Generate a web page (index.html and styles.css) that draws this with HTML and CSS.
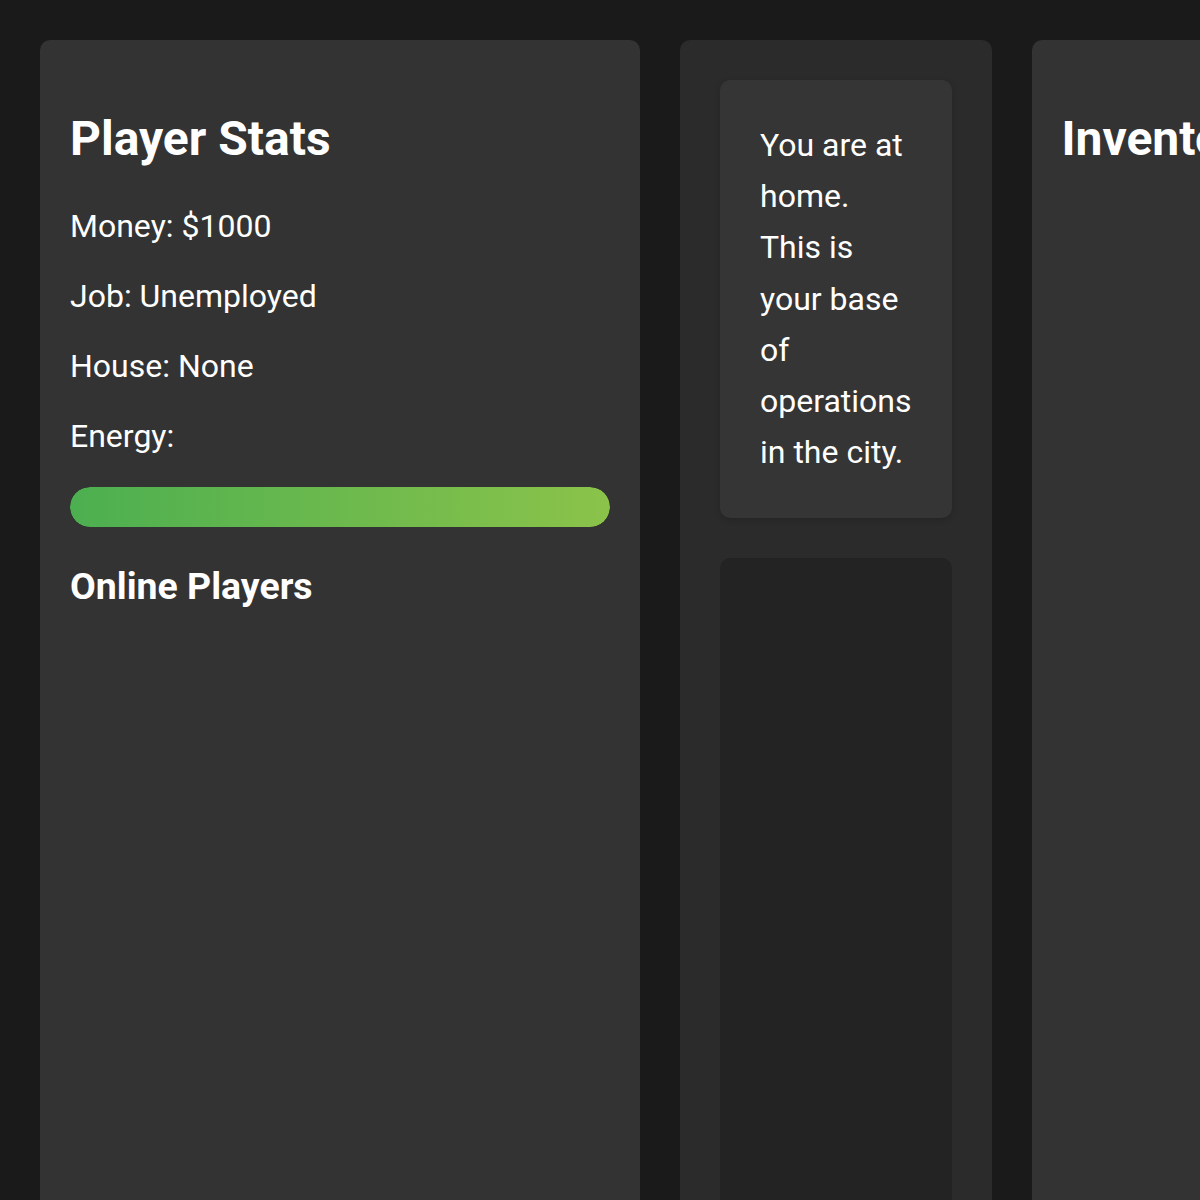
FILE: index.html
```html
<!DOCTYPE html>
<html lang="en">
<head>
<meta charset="utf-8">
<title>City Game</title>
<link rel="stylesheet" href="styles.css">
</head>
<body>
<div class="layout">
  <section class="panel stats">
    <h2>Player Stats</h2>
    <p>Money: $1000</p>
    <p>Job: Unemployed</p>
    <p>House: None</p>
    <p>Energy:</p>
    <div class="energy-bar"><div class="energy-fill" style="width:100%"></div></div>
    <h3>Online Players</h3>
    <div class="players"></div>
  </section>
  <section class="panel center">
    <div class="location">You are at home. This is your base of operations in the city.</div>
    <div class="log"></div>
  </section>
  <section class="panel inventory">
    <h2>Inventory</h2>
  </section>
</div>
</body>
</html>
```
FILE: styles.css
```css
html, body {
  margin: 0;
  padding: 0;
}
body {
  background: #1a1a1a;
  color: #ffffff;
  font-family: Roboto, "Noto Sans", sans-serif;
  font-size: 32px;
  overflow: hidden;
}
.layout {
  display: grid;
  grid-template-columns: 600px 1fr 600px;
  gap: 40px;
  padding: 40px;
  width: 1120px;
  min-height: 1300px;
}
.panel {
  border-radius: 10px;
  min-height: 1300px;
}
.stats, .inventory {
  background: #333333;
  padding: 30px;
}
.stats p {
  margin: 32px 0;
}
h2 {
  font-size: 48px;
  font-weight: 700;
  margin: 40px 0;
}
h3 {
  font-size: 37.44px;
  font-weight: 700;
  margin: 37.44px 0;
}
.energy-bar {
  height: 40px;
  border-radius: 20px;
  overflow: hidden;
  background: #222;
}
.energy-fill {
  height: 100%;
  background: linear-gradient(to right, #4caf50, #8bc34a);
  border-radius: 20px;
}
.center {
  background: #2b2b2b;
  padding: 40px;
  display: flex;
  flex-direction: column;
  gap: 40px;
}
.location {
  background: #353535;
  border-radius: 10px;
  padding: 40px;
  line-height: 1.6;
  box-shadow: 0 2px 6px rgba(0, 0, 0, 0.15);
}
.log {
  background: #232323;
  border-radius: 10px;
  flex: 1;
  min-height: 700px;
}
```
